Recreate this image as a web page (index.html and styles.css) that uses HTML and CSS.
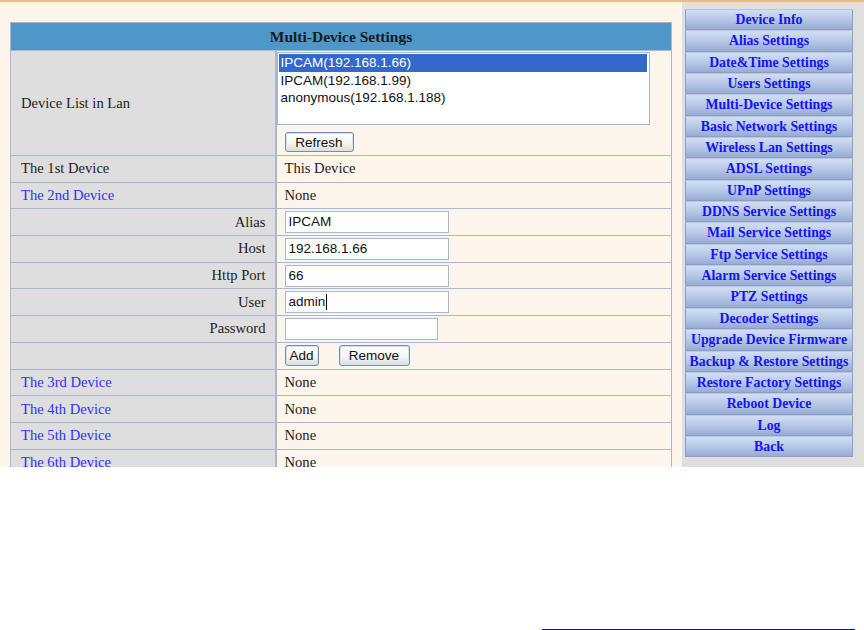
FILE: index.html
```html
<!DOCTYPE html>
<html>
<head>
<meta charset="utf-8">
<title>Multi-Device Settings</title>
<link rel="stylesheet" href="styles.css">
</head>
<body>
<div class="topline"></div>
<div class="frames">
  <main class="content">
    <table class="settings">
      <tr class="head"><th colspan="2">Multi-Device Settings</th></tr>
      <tr class="listrow">
        <td class="label">Device List in Lan</td>
        <td class="value listcell">
          <div class="listbox">
            <div class="opt selected">IPCAM(192.168.1.66)</div>
            <div class="opt">IPCAM(192.168.1.99)</div>
            <div class="opt">anonymous(192.168.1.188)</div>
          </div>
          <div class="refresh-wrap"><button class="btn btn-refresh">Refresh</button></div>
        </td>
      </tr>
      <tr><td class="label">The 1st Device</td><td class="value">This Device</td></tr>
      <tr><td class="label link">The 2nd Device</td><td class="value">None</td></tr>
      <tr><td class="label right">Alias</td><td class="value"><div class="input">IPCAM</div></td></tr>
      <tr><td class="label right">Host</td><td class="value"><div class="input">192.168.1.66</div></td></tr>
      <tr><td class="label right">Http Port</td><td class="value"><div class="input">66</div></td></tr>
      <tr><td class="label right">User</td><td class="value"><div class="input">admin<span class="caret"></span></div></td></tr>
      <tr><td class="label right">Password</td><td class="value"><div class="input pw"></div></td></tr>
      <tr><td class="label"></td><td class="value"><div class="btnrow"><button class="btn btn-add">Add</button><button class="btn btn-remove">Remove</button></div></td></tr>
      <tr><td class="label link">The 3rd Device</td><td class="value">None</td></tr>
      <tr><td class="label link">The 4th Device</td><td class="value">None</td></tr>
      <tr><td class="label link">The 5th Device</td><td class="value">None</td></tr>
      <tr><td class="label link">The 6th Device</td><td class="value">None</td></tr>
    </table>
  </main>
  <nav class="sidebar">
    <div class="navbtn">Device Info</div>
    <div class="navbtn">Alias Settings</div>
    <div class="navbtn">Date&amp;Time Settings</div>
    <div class="navbtn">Users Settings</div>
    <div class="navbtn">Multi-Device Settings</div>
    <div class="navbtn">Basic Network Settings</div>
    <div class="navbtn">Wireless Lan Settings</div>
    <div class="navbtn">ADSL Settings</div>
    <div class="navbtn">UPnP Settings</div>
    <div class="navbtn">DDNS Service Settings</div>
    <div class="navbtn">Mail Service Settings</div>
    <div class="navbtn">Ftp Service Settings</div>
    <div class="navbtn">Alarm Service Settings</div>
    <div class="navbtn">PTZ Settings</div>
    <div class="navbtn">Decoder Settings</div>
    <div class="navbtn">Upgrade Device Firmware</div>
    <div class="navbtn">Backup &amp; Restore Settings</div>
    <div class="navbtn">Restore Factory Settings</div>
    <div class="navbtn">Reboot Device</div>
    <div class="navbtn">Log</div>
    <div class="navbtn">Back</div>
  </nav>
</div>
<div class="footer"><div class="rule"></div></div>
</body>
</html>
```
FILE: styles.css
```css
html, body {
  margin: 0;
  padding: 0;
  background: #ffffff;
}
body {
  width: 864px;
  height: 630px;
  overflow: hidden;
  font-family: "Liberation Serif", "Times New Roman", serif;
  font-size: 14.6px;
  color: #222222;
}
.topline {
  height: 2px;
  background: #e8c07c;
}
.frames {
  display: flex;
  height: 465px;
  overflow: hidden;
}
.content {
  width: 682px;
  background: #fdf5eb;
  padding: 20px 0 0 10px;
  box-sizing: border-box;
  overflow: hidden;
}
.settings {
  width: 662px;
  border-collapse: collapse;
  border: 1px solid #a9b8d0;
}
.settings th {
  height: 27px;
  padding: 0;
  background: #4f97c9;
  font-size: 15.5px;
  font-weight: bold;
  color: #1a1a1a;
  border: 1px solid #a9b8d0;
}
.settings td {
  height: 26.7px;
  padding: 0;
  border: 1px solid #a9b8d0;
  box-sizing: border-box;
}
.settings td.label {
  width: 265px;
  background: #dedede;
  padding-left: 10px;
  border-right: 2px solid #a9b8d0;
}
.settings td.label.right {
  text-align: right;
  padding-right: 9px;
}
.settings td.link {
  color: #3030f8;
}
.settings td.value {
  background: #fdf5eb;
  padding-left: 8px;
}
.listrow td {
  height: 105px;
}
.settings td.listcell {
  padding-left: 0;
  vertical-align: top;
}
.listbox {
  width: 373px;
  height: 73px;
  box-sizing: border-box;
  margin-top: 1px;
  border: 1px solid #a7b7d0;
  background: #ffffff;
  padding: 1px 2px 0 1px;
  font-family: "Liberation Sans", Arial, sans-serif;
  font-size: 13.5px;
  color: #111111;
}
.opt {
  height: 17.5px;
  line-height: 17.5px;
  padding-left: 2px;
  white-space: nowrap;
}
.opt.selected {
  background: #3468cb;
  color: #ffffff;
}
.refresh-wrap {
  padding: 7px 0 0 8px;
}
.btn {
  font-family: "Liberation Sans", Arial, sans-serif;
  font-size: 13.5px;
  color: #111111;
  height: 21px;
  padding: 0;
  border: 1px solid #6f8db0;
  border-radius: 3px;
  background: linear-gradient(#ffffff, #f4f4f0 60%, #dcdcd4);
  box-shadow: inset 0 0 0 1px #d6e2f0;
  cursor: default;
}
.btn-refresh { width: 69px; height: 20px; }
.btn-add { width: 34px; }
.btn-remove { width: 71px; }
.btnrow {
  display: flex;
  gap: 20px;
}
.input {
  width: 164px;
  height: 22px;
  box-sizing: border-box;
  border: 1px solid #a6b8d2;
  background: #ffffff;
  font-family: "Liberation Sans", Arial, sans-serif;
  font-size: 13.5px;
  line-height: 20px;
  padding-left: 3px;
  color: #111111;
  display: flex;
  align-items: center;
}
.input.pw {
  width: 153px;
}
.caret {
  display: inline-block;
  width: 1px;
  height: 16px;
  background: #000000;
  margin-left: 1px;
}
.sidebar {
  width: 182px;
  background: #dfdfdf;
  padding: 7px 0 0 3px;
  box-sizing: border-box;
  display: flex;
  flex-direction: column;
}
.navbtn {
  width: 168px;
  height: 21.35px;
  flex: none;
  box-sizing: border-box;
  border: 1px solid #8c9ec6;
  border-top-color: #b5c6e4;
  background: linear-gradient(#d2def3, #b7c8e6 50%, #98acd3);
  color: #1414f0;
  font-weight: bold;
  font-size: 13.8px;
  text-align: center;
  line-height: 19px;
  white-space: nowrap;
  overflow: hidden;
}
.footer {
  height: 163px;
  display: flex;
  align-items: flex-end;
  justify-content: flex-end;
  padding-right: 9px;
}
.rule {
  width: 313px;
  height: 0;
  border-top: 2px solid #0a0ad0;
  margin-bottom: -1px;
}
```
